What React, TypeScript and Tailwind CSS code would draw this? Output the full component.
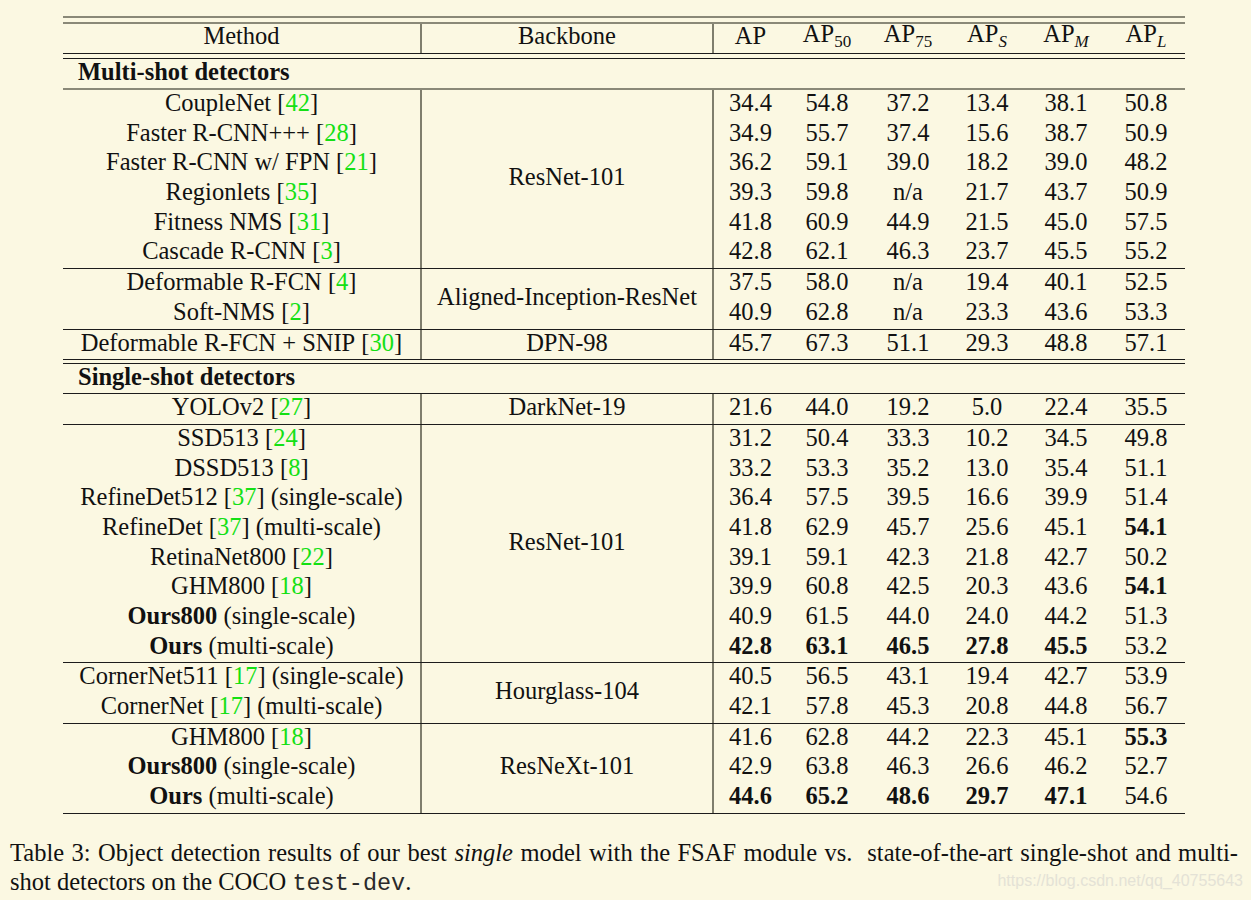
import React from "react";

type Method = { name: string; bold?: boolean; cite?: string; note?: string };
type Row = [Method, string[]];
type Group = { backbone: string; rows: Row[] };

// "*" in front of a number means it is printed in bold
const multiShot: Group[] = [
  {
    backbone: "ResNet-101",
    rows: [
      [{ name: "CoupleNet", cite: "42" }, ["34.4", "54.8", "37.2", "13.4", "38.1", "50.8"]],
      [{ name: "Faster R-CNN+++", cite: "28" }, ["34.9", "55.7", "37.4", "15.6", "38.7", "50.9"]],
      [{ name: "Faster R-CNN w/ FPN", cite: "21" }, ["36.2", "59.1", "39.0", "18.2", "39.0", "48.2"]],
      [{ name: "Regionlets", cite: "35" }, ["39.3", "59.8", "n/a", "21.7", "43.7", "50.9"]],
      [{ name: "Fitness NMS", cite: "31" }, ["41.8", "60.9", "44.9", "21.5", "45.0", "57.5"]],
      [{ name: "Cascade R-CNN", cite: "3" }, ["42.8", "62.1", "46.3", "23.7", "45.5", "55.2"]],
    ],
  },
  {
    backbone: "Aligned-Inception-ResNet",
    rows: [
      [{ name: "Deformable R-FCN", cite: "4" }, ["37.5", "58.0", "n/a", "19.4", "40.1", "52.5"]],
      [{ name: "Soft-NMS", cite: "2" }, ["40.9", "62.8", "n/a", "23.3", "43.6", "53.3"]],
    ],
  },
  {
    backbone: "DPN-98",
    rows: [
      [{ name: "Deformable R-FCN + SNIP", cite: "30" }, ["45.7", "67.3", "51.1", "29.3", "48.8", "57.1"]],
    ],
  },
];

const singleShot: Group[] = [
  {
    backbone: "DarkNet-19",
    rows: [[{ name: "YOLOv2", cite: "27" }, ["21.6", "44.0", "19.2", "5.0", "22.4", "35.5"]]],
  },
  {
    backbone: "ResNet-101",
    rows: [
      [{ name: "SSD513", cite: "24" }, ["31.2", "50.4", "33.3", "10.2", "34.5", "49.8"]],
      [{ name: "DSSD513", cite: "8" }, ["33.2", "53.3", "35.2", "13.0", "35.4", "51.1"]],
      [{ name: "RefineDet512", cite: "37", note: "(single-scale)" }, ["36.4", "57.5", "39.5", "16.6", "39.9", "51.4"]],
      [{ name: "RefineDet", cite: "37", note: "(multi-scale)" }, ["41.8", "62.9", "45.7", "25.6", "45.1", "*54.1"]],
      [{ name: "RetinaNet800", cite: "22" }, ["39.1", "59.1", "42.3", "21.8", "42.7", "50.2"]],
      [{ name: "GHM800", cite: "18" }, ["39.9", "60.8", "42.5", "20.3", "43.6", "*54.1"]],
      [{ name: "Ours800", bold: true, note: "(single-scale)" }, ["40.9", "61.5", "44.0", "24.0", "44.2", "51.3"]],
      [{ name: "Ours", bold: true, note: "(multi-scale)" }, ["*42.8", "*63.1", "*46.5", "*27.8", "*45.5", "53.2"]],
    ],
  },
  {
    backbone: "Hourglass-104",
    rows: [
      [{ name: "CornerNet511", cite: "17", note: "(single-scale)" }, ["40.5", "56.5", "43.1", "19.4", "42.7", "53.9"]],
      [{ name: "CornerNet", cite: "17", note: "(multi-scale)" }, ["42.1", "57.8", "45.3", "20.8", "44.8", "56.7"]],
    ],
  },
  {
    backbone: "ResNeXt-101",
    rows: [
      [{ name: "GHM800", cite: "18" }, ["41.6", "62.8", "44.2", "22.3", "45.1", "*55.3"]],
      [{ name: "Ours800", bold: true, note: "(single-scale)" }, ["42.9", "63.8", "46.3", "26.6", "46.2", "52.7"]],
      [{ name: "Ours", bold: true, note: "(multi-scale)" }, ["*44.6", "*65.2", "*48.6", "*29.7", "*47.1", "54.6"]],
    ],
  },
];

const colW = ["w-[73px]", "w-[80px]", "w-[82px]", "w-[76px]", "w-[82px]", "w-[78px]"];

const Rule = ({ gray }: { gray?: boolean }) =>
  gray ? <div className="h-[2px] bg-[#8a8978]" /> : <div className="h-px bg-[#1c1c1c]" />;

const MethodCell = ({ m }: { m: Method }) => (
  <div className="h-[29.7px] pb-[4px] flex items-center justify-center whitespace-nowrap">
    <span className={m.bold ? "font-bold" : ""}>{m.name}</span>
    {m.cite && (
      <span>
        &nbsp;[<span className="text-[#14e014]">{m.cite}</span>]
      </span>
    )}
    {m.note && <span>&nbsp;{m.note}</span>}
  </div>
);

const GroupRows = ({ g }: { g: Group }) => (
  <div className="flex">
    <div className="w-[359px] border-r-2 border-[#7f7e6d]">
      {g.rows.map(([m], i) => (
        <MethodCell key={i} m={m} />
      ))}
    </div>
    <div className="w-[292px] border-r-2 border-[#7f7e6d] flex items-center justify-center">
      <span className="relative -top-[2px]">{g.backbone}</span>
    </div>
    <div className="flex-1">
      {g.rows.map(([, nums], i) => (
        <div key={i} className="h-[29.7px] pb-[4px] flex">
          {nums.map((n, j) => (
            <div key={j} className={`${colW[j]} flex items-center justify-center ${n.startsWith("*") ? "font-bold" : ""}`}>
              {n.replace("*", "")}
            </div>
          ))}
        </div>
      ))}
    </div>
  </div>
);

const Sub = ({ children, italic }: { children: React.ReactNode; italic?: boolean }) => (
  <span className={`relative top-[5px] text-[17px] ${italic ? "italic" : ""}`}>{children}</span>
);

const Section = ({ title }: { title: string }) => (
  <div className="h-[29px] flex items-center pl-[15px] font-bold">
    <span className="relative -top-[2px]">{title}</span>
  </div>
);

const App = () => {
  const heads = [
    <span>AP</span>,
    <span>AP<Sub>50</Sub></span>,
    <span>AP<Sub>75</Sub></span>,
    <span>AP<Sub italic>S</Sub></span>,
    <span>AP<Sub italic>M</Sub></span>,
    <span>AP<Sub italic>L</Sub></span>,
  ];

  return (
    <div className="relative w-[1251px] h-[900px] bg-[#fbf8e2] text-[#111] font-['Liberation_Serif','Times_New_Roman',serif] text-[24.5px] leading-[29.7px] overflow-hidden">
      <div className="ml-[63px] w-[1122px] pt-[16px]">
        <Rule gray />
        <div className="h-[4px]" />
        <Rule gray />
        <div className="flex h-[29px]">
          <div className="w-[359px] border-r-2 border-[#7f7e6d] flex items-center justify-center">
            <span className="relative -top-[3px]">Method</span>
          </div>
          <div className="w-[292px] border-r-2 border-[#7f7e6d] flex items-center justify-center">
            <span className="relative -top-[3px]">Backbone</span>
          </div>
          <div className="flex-1 flex">
            {heads.map((h, j) => (
              <div key={j} className={`${colW[j]} flex items-center justify-center`}>
                <span className="relative -top-[3px]">{h}</span>
              </div>
            ))}
          </div>
        </div>
        <Rule />
        <div className="h-[4px]" />
        <Rule />
        <Section title="Multi-shot detectors" />
        <Rule gray />
        {multiShot.map((g, i) => (
          <React.Fragment key={i}>
            {i > 0 && <Rule />}
            <GroupRows g={g} />
          </React.Fragment>
        ))}
        <Rule />
        <div className="h-[3px]" />
        <Rule />
        <Section title="Single-shot detectors" />
        <Rule />
        {singleShot.map((g, i) => (
          <React.Fragment key={i}>
            {i > 0 && <Rule />}
            <GroupRows g={g} />
          </React.Fragment>
        ))}
        <Rule />
      </div>

      <div className="ml-[10px] w-[1228px] mt-[24px] leading-[29px]">
        <p className="[text-align-last:justify]">
          Table 3: Object detection results of our best <i>single</i> model with the FSAF module vs.&nbsp; state-of-the-art single-shot and multi-
        </p>
        <p>
          shot detectors on the COCO{" "}
          <span className="font-['Liberation_Mono','Courier_New',monospace] text-[23.5px] text-[#2a2a2a]">test-dev</span>.
        </p>
      </div>

      <div className="absolute right-[8px] top-[871px] whitespace-nowrap text-[16px] leading-[20px] text-[#e4e2d6] font-['Liberation_Sans',Arial,sans-serif]">
        https://blog.csdn.net/qq_40755643
      </div>
    </div>
  );
};

export default App;
